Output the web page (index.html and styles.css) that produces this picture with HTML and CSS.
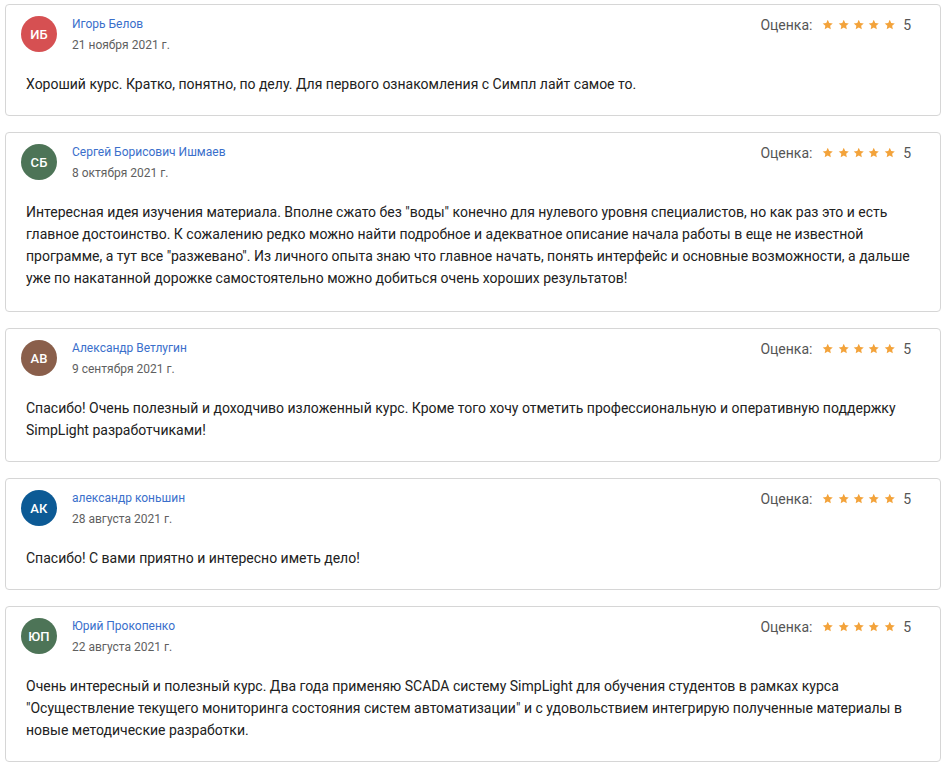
FILE: index.html
```html
<!DOCTYPE html>
<html lang="ru">
<head>
<meta charset="utf-8">
<title>Отзывы</title>
<link rel="stylesheet" href="styles.css">
</head>
<body>
<svg class="defs" width="0" height="0" aria-hidden="true">
  <defs>
    <symbol id="star" viewBox="0 0 24 24">
      <polygon points="12 1.5 15.09 8.26 22.5 9.27 17 14.14 18.38 21.52 12 17.77 5.62 21.52 7 14.14 1.5 9.27 8.91 8.26"/>
    </symbol>
  </defs>
</svg>
<div class="reviews">

  <article class="review">
    <header class="review-head">
      <div class="avatar av-red">ИБ</div>
      <div class="author">
        <div class="author-name">Игорь Белов</div>
        <div class="author-date">21 ноября 2021 г.</div>
      </div>
      <div class="rating">
        <span class="rating-label">Оценка:</span>
        <span class="stars"><svg><use href="#star"/></svg><svg><use href="#star"/></svg><svg><use href="#star"/></svg><svg><use href="#star"/></svg><svg><use href="#star"/></svg></span>
        <span class="rating-value">5</span>
      </div>
    </header>
    <p class="review-text">Хороший курс. Кратко, понятно, по делу. Для первого ознакомления с Симпл лайт самое то.</p>
  </article>

  <article class="review review-long">
    <header class="review-head">
      <div class="avatar av-green">СБ</div>
      <div class="author">
        <div class="author-name">Сергей Борисович Ишмаев</div>
        <div class="author-date">8 октября 2021 г.</div>
      </div>
      <div class="rating">
        <span class="rating-label">Оценка:</span>
        <span class="stars"><svg><use href="#star"/></svg><svg><use href="#star"/></svg><svg><use href="#star"/></svg><svg><use href="#star"/></svg><svg><use href="#star"/></svg></span>
        <span class="rating-value">5</span>
      </div>
    </header>
    <p class="review-text">Интересная идея изучения материала. Вполне сжато без "воды" конечно для нулевого уровня специалистов, но как раз это и есть главное достоинство. К сожалению редко можно найти подробное и адекватное описание начала работы в еще не известной программе, а тут все "разжевано". Из личного опыта знаю что главное начать, понять интерфейс и основные возможности, а дальше уже по накатанной дорожке самостоятельно можно добиться очень хороших результатов!</p>
  </article>

  <article class="review">
    <header class="review-head">
      <div class="avatar av-brown">АВ</div>
      <div class="author">
        <div class="author-name">Александр Ветлугин</div>
        <div class="author-date">9 сентября 2021 г.</div>
      </div>
      <div class="rating">
        <span class="rating-label">Оценка:</span>
        <span class="stars"><svg><use href="#star"/></svg><svg><use href="#star"/></svg><svg><use href="#star"/></svg><svg><use href="#star"/></svg><svg><use href="#star"/></svg></span>
        <span class="rating-value">5</span>
      </div>
    </header>
    <p class="review-text">Спасибо! Очень полезный и доходчиво изложенный курс. Кроме того хочу отметить профессиональную и оперативную поддержку SimpLight разработчиками!</p>
  </article>

  <article class="review">
    <header class="review-head">
      <div class="avatar av-blue">АК</div>
      <div class="author">
        <div class="author-name">александр коньшин</div>
        <div class="author-date">28 августа 2021 г.</div>
      </div>
      <div class="rating">
        <span class="rating-label">Оценка:</span>
        <span class="stars"><svg><use href="#star"/></svg><svg><use href="#star"/></svg><svg><use href="#star"/></svg><svg><use href="#star"/></svg><svg><use href="#star"/></svg></span>
        <span class="rating-value">5</span>
      </div>
    </header>
    <p class="review-text">Спасибо! С вами приятно и интересно иметь дело!</p>
  </article>

  <article class="review">
    <header class="review-head">
      <div class="avatar av-green">ЮП</div>
      <div class="author">
        <div class="author-name">Юрий Прокопенко</div>
        <div class="author-date">22 августа 2021 г.</div>
      </div>
      <div class="rating">
        <span class="rating-label">Оценка:</span>
        <span class="stars"><svg><use href="#star"/></svg><svg><use href="#star"/></svg><svg><use href="#star"/></svg><svg><use href="#star"/></svg><svg><use href="#star"/></svg></span>
        <span class="rating-value">5</span>
      </div>
    </header>
    <p class="review-text">Очень интересный и полезный курс. Два года применяю SCADA систему SimpLight для обучения студентов в рамках курса "Осуществление текущего мониторинга состояния систем автоматизации" и с удовольствием интегрирую полученные материалы в новые методические разработки.</p>
  </article>

</div>
</body>
</html>
```

FILE: styles.css
```css
* {
  box-sizing: border-box;
}

body {
  margin: 0;
  padding: 4px 8px 0 5px;
  background: #ffffff;
  font-family: Roboto, "Noto Sans", Arial, sans-serif;
  color: #212121;
}

.defs {
  position: absolute;
  width: 0;
  height: 0;
  overflow: hidden;
}

.reviews {
  display: flex;
  flex-direction: column;
  gap: 16px;
}

.review {
  border: 1px solid #d6d6d6;
  border-radius: 4px;
  background: #fff;
  padding: 9px 0 20px;
}

.review-long {
  padding-bottom: 22px;
}

.review-head {
  display: flex;
  align-items: center;
  padding: 0 29px 0 15px;
}

.avatar {
  flex: none;
  width: 36px;
  height: 36px;
  border-radius: 50%;
  display: flex;
  align-items: center;
  justify-content: center;
  color: #fff;
  font-size: 13px;
  font-weight: 500;
  letter-spacing: 0.2px;
}

.av-red { background: #d65052; }
.av-green { background: #4d7457; }
.av-brown { background: #8a5f4b; }
.av-blue { background: #0c5a95; }

.author {
  margin-left: 15px;
  margin-top: 1px;
  display: flex;
  flex-direction: column;
  gap: 3px;
}

.author-name {
  font-size: 12px;
  line-height: 18px;
  color: #3a6fcb;
}

.author-date {
  font-size: 12px;
  line-height: 18px;
  color: #5f5f5f;
}

.rating {
  margin-left: auto;
  align-self: flex-start;
  margin-top: 1px;
  display: flex;
  align-items: center;
  font-size: 14px;
  line-height: 20px;
  color: #555;
}

.rating-label {
  margin-right: 10px;
}

.stars {
  display: flex;
  align-items: center;
  gap: 3.8px;
  fill: #f3a33b;
}

.stars svg {
  width: 11.5px;
  height: 11.5px;
  display: block;
}

.rating-value {
  margin-left: 8px;
  color: #555;
}

.review-text {
  margin: 19px 0 0;
  padding: 0 20px;
  font-size: 14px;
  line-height: 22px;
  color: #212121;
}
```
